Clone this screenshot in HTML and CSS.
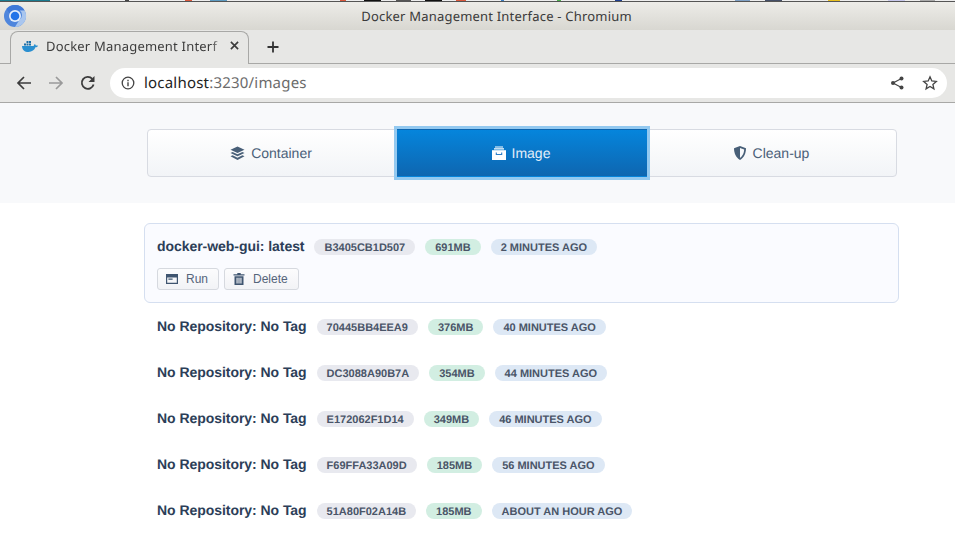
FILE: index.html
```html
<!DOCTYPE html>
<html lang="en">
<head>
    <meta charset="UTF-8">
    <meta name="viewport" content="width=device-width, initial-scale=1.0">
    <title>Docker Management Interface - Chromium</title>
    <link rel="stylesheet" href="styles.css">
</head>
<body>

    <!-- Browser window top -->
    <div class="desk-strip"></div>
    <div class="title-bar">
        <svg class="chromium-logo" width="24" height="24" viewBox="0 0 24 24">
            <circle cx="12" cy="12" r="11" fill="#4f86dc"/>
            <path d="M12 1a11 11 0 0 1 9.600 5.500H12a5.500 5.500 0 0 0-5 3.200L3.400 5A11 11 0 0 1 12 1z" fill="#3f79d8"/>
            <path d="M21.600 6.500A11 11 0 0 1 12 23l4.600-7.500a5.500 5.500 0 0 0 .2-9z" fill="#a9c6ee"/>
            <circle cx="12" cy="12" r="6" fill="#e4eefb"/>
            <circle cx="12" cy="12" r="4.300" fill="#2374e8"/>
        </svg>
        <span>Docker Management Interface - Chromium</span>
    </div>
    <div class="tab-strip">
        <div class="tab">
            <svg class="favicon" width="16" height="12" viewBox="0 0 16 12">
                <path d="M0 6h11.600c.3-1 .9-1.600 1.300-1.900.4.400.8.900.9 1.500.600-.2 1.400-.2 2.200.2-.5 1-1.400 1.500-2.600 1.500C12.500 10 10 12 6.500 12 2.500 12 .3 10 0 6z" fill="#2a8fd0"/>
                <path d="M2 3.500h2v2H2zM4.500 3.500h2v2h-2zM7 3.500h2v2H7zM4.500 1h2v2h-2zM7 1h2v2H7z" fill="#1d6fa8"/>
            </svg>
            <span class="tab-title">Docker Management Interf</span>
            <svg class="tab-close" width="9" height="9" viewBox="0 0 10 10">
                <path d="M1 1l8 8M9 1L1 9" stroke="#3c3c3c" stroke-width="1.800"/>
            </svg>
        </div>
        <svg class="new-tab" width="12" height="12" viewBox="0 0 12 12">
            <path d="M6 .5v11M.5 6h11" stroke="#333" stroke-width="1.800"/>
        </svg>
    </div>
    <div class="toolbar">
        <svg class="nav-icon" width="16" height="16" viewBox="0 0 16 16">
            <path d="M15 8H2M8 2L2 8l6 6" fill="none" stroke="#3c3c3c" stroke-width="1.700"/>
        </svg>
        <svg class="nav-icon" width="16" height="16" viewBox="0 0 16 16">
            <path d="M1 8h13M8 2l6 6-6 6" fill="none" stroke="#9a9a9a" stroke-width="1.700"/>
        </svg>
        <svg class="nav-icon" width="16" height="16" viewBox="0 0 16 16">
            <path d="M13.600 9.500A6 6 0 1 1 12.300 3.800" fill="none" stroke="#3c3c3c" stroke-width="1.800"/>
            <path d="M14.500 1v6h-6z" fill="#3c3c3c"/>
        </svg>
        <div class="omnibox">
            <svg width="14" height="14" viewBox="0 0 14 14">
                <circle cx="7" cy="7" r="5.800" fill="none" stroke="#444" stroke-width="1.300"/>
                <path d="M7 6.200v4M7 3.800v1.400" stroke="#444" stroke-width="1.400"/>
            </svg>
            <span class="url"><span class="url-host">localhost</span>:3230/images</span>
            <svg class="share" width="14" height="14" viewBox="0 0 14 14">
                <path d="M11.500 2.500L3 7l8.500 4.500" fill="none" stroke="#444" stroke-width="1.200"/>
                <circle cx="11.500" cy="2.500" r="2" fill="#444"/>
                <circle cx="3" cy="7" r="2" fill="#444"/>
                <circle cx="11.500" cy="11.500" r="2" fill="#444"/>
            </svg>
            <svg width="16" height="16" viewBox="0 0 16 16">
                <path d="M8 1.800l1.800 4.200 4.500.4-3.400 3 1 4.400L8 11.500l-3.900 2.300 1-4.400-3.400-3 4.500-.4z" fill="none" stroke="#444" stroke-width="1.300"/>
            </svg>
        </div>
    </div>

    <!-- Page hero with tabs -->
    <section class="hero">
        <nav class="page-tabs">
            <a class="page-tab">
                <svg width="15" height="15" viewBox="0 0 15 15">
                    <path d="M7.500 .5l7 3.200-7 3.300-7-3.300z" fill="#485f78"/>
                    <path d="M2.600 6l-2.100 1 7 3.300 7-3.300-2.100-1-4.900 2.300z" fill="#485f78"/>
                    <path d="M2.600 9.300l-2.100 1 7 3.700 7-3.700-2.100-1-4.900 2.400z" fill="#485f78"/>
                </svg>
                Container
            </a>
            <a class="page-tab active">
                <svg width="14" height="14" viewBox="0 0 14 14">
                    <path d="M3 .5h8v1H3zM2 2.300h10v1.100H2z" fill="#fff"/>
                    <path d="M0 4.200h14V14H0z" fill="#fff"/>
                    <path d="M4.300 6.500v2h5.400v-2" fill="none" stroke="#2c7fc9" stroke-width="1.100"/>
                </svg>
                Image
            </a>
            <a class="page-tab">
                <svg width="14" height="14" viewBox="0 0 14 14">
                    <path d="M7 0l6 2.300c0 5-1.800 9.300-6 11.700C2.800 11.600 1 7.300 1 2.300z" fill="#485f78"/>
                    <path d="M7 2l4.200 1.600C11 7 9.800 10 7 11.900z" fill="#f8f9fb"/>
                </svg>
                Clean-up
            </a>
        </nav>
    </section>

    <!-- Image list -->
    <section class="image-list">
        <div class="image-row selected">
            <div class="image-head">
                <h3>docker-web-gui: latest</h3>
                <span class="tag tag-id">B3405CB1D507</span>
                <span class="tag tag-size">691MB</span>
                <span class="tag tag-time">2 MINUTES AGO</span>
            </div>
            <div class="image-actions">
                <button class="action-btn">
                    <svg width="12" height="10" viewBox="0 0 12 10">
                        <path d="M0 0h12v10H0zM1.200 3.400v5.400h9.600V3.400zM2.400 4.500h4.200v1.300H2.400z" fill="#3f5570" fill-rule="evenodd"/>
                    </svg>
                    Run
                </button>
                <button class="action-btn">
                    <svg width="12" height="12" viewBox="0 0 12 12">
                        <path d="M.5 1.300h3.800V0h3.400v1.300h3.800v1.300H.5zM1.500 3.300h9V12h-9zM3.500 4.800v5.700h1.100V4.800zM5.450 4.800v5.700h1.100V4.800zM7.400 4.800v5.700h1.100V4.800z" fill="#3f5570" fill-rule="evenodd"/>
                    </svg>
                    Delete
                </button>
            </div>
        </div>
        <div class="image-row">
            <div class="image-head">
                <h3>No Repository: No Tag</h3>
                <span class="tag tag-id">70445BB4EEA9</span>
                <span class="tag tag-size">376MB</span>
                <span class="tag tag-time">40 MINUTES AGO</span>
            </div>
        </div>
        <div class="image-row">
            <div class="image-head">
                <h3>No Repository: No Tag</h3>
                <span class="tag tag-id">DC3088A90B7A</span>
                <span class="tag tag-size">354MB</span>
                <span class="tag tag-time">44 MINUTES AGO</span>
            </div>
        </div>
        <div class="image-row">
            <div class="image-head">
                <h3>No Repository: No Tag</h3>
                <span class="tag tag-id">E172062F1D14</span>
                <span class="tag tag-size">349MB</span>
                <span class="tag tag-time">46 MINUTES AGO</span>
            </div>
        </div>
        <div class="image-row">
            <div class="image-head">
                <h3>No Repository: No Tag</h3>
                <span class="tag tag-id">F69FFA33A09D</span>
                <span class="tag tag-size">185MB</span>
                <span class="tag tag-time">56 MINUTES AGO</span>
            </div>
        </div>
        <div class="image-row">
            <div class="image-head">
                <h3>No Repository: No Tag</h3>
                <span class="tag tag-id">51A80F02A14B</span>
                <span class="tag tag-size">185MB</span>
                <span class="tag tag-time">ABOUT AN HOUR AGO</span>
            </div>
        </div>
    </section>

</body>
</html>
```

FILE: styles.css
```css
/* General body */
html,
body {
    margin: 0;
    padding: 0;
    height: 549px;
    overflow: hidden;
    background-color: #fff;
    font-family: "Liberation Sans", Arial, sans-serif;
    text-rendering: geometricPrecision;
}

/* Browser window */
.desk-strip {
    height: 1px;
    background-color: #ececec;
    background-image: linear-gradient(to right,
        #1a7a8f 0 50px, #eee 50px 125px, #444 125px 129px, #eee 129px 185px,
        #d9583c 185px 192px, #eee 192px 210px, #5d9ac0 210px 227px, #eee 227px 340px,
        #d9583c 340px 346px, #eee 346px 364px, #111 364px 381px, #eee 381px 396px,
        #555 396px 411px, #eee 411px 425px, #111 425px 442px, #eee 442px 456px,
        #d9583c 456px 466px, #eee 466px 501px, #3d7fc4 501px 504px, #eee 504px 557px,
        #4cae4c 557px 561px, #eee 561px 615px, #1f3f8f 615px 622px, #eee 622px 735px,
        #7fa0c4 735px 750px, #eee 750px 765px, #454f66 765px 782px, #eee 782px 828px,
        #e8c020 828px 840px, #eee 840px 888px, #c8c8ec 888px 905px, #eee 905px 920px,
        #aaa 920px 935px, #eee 935px);
}

.title-bar {
    height: 29px;
    padding-left: 38px;
    display: flex;
    align-items: center;
    justify-content: center;
    position: relative;
    border-top: 1px solid #555;
    box-sizing: border-box;
    background: linear-gradient(#edecE8, #d8d7d1);
    font-family: "Noto Sans", sans-serif;
    font-size: 13px;
    letter-spacing: 0.2px;
    color: #3a3a3a;
}

.chromium-logo {
    position: absolute;
    left: 3px;
    top: 2px;
}

.tab-strip {
    height: 33px;
    display: flex;
    align-items: flex-end;
    background-color: #e7e7e5;
    border-bottom: 1px solid #a8a8a6;
}

.tab {
    width: 239px;
    height: 33px;
    margin-left: 10px;
    margin-bottom: -1px;
    padding: 0 9px 5px 11px;
    box-sizing: border-box;
    display: flex;
    align-items: center;
    background-color: #e7e7e5;
    border: 1px solid #a8a8a6;
    border-bottom: none;
    border-radius: 8px 8px 0 0;
    font-family: "Noto Sans", sans-serif;
    font-size: 13px;
    letter-spacing: 0.2px;
    color: #3c3c3c;
}

.favicon {
    flex-shrink: 0;
    margin-right: 8px;
}

.tab-title {
    flex: 1;
    overflow: hidden;
    white-space: nowrap;
    -webkit-mask-image: linear-gradient(to left, transparent, #000 10px);
    mask-image: linear-gradient(to left, transparent, #000 10px);
}

.tab-close {
    flex-shrink: 0;
    margin-left: 8px;
}

.new-tab {
    align-self: center;
    margin-left: 18px;
}

.toolbar {
    height: 39px;
    display: flex;
    align-items: center;
    padding-left: 16px;
    box-sizing: border-box;
    background-color: #e7e7e5;
    border-bottom: 1px solid #a8a8a6;
}

.nav-icon {
    margin-right: 16px;
}

.omnibox {
    width: 837px;
    height: 30px;
    margin-left: -2px;
    padding: 0 9px 0 11px;
    box-sizing: border-box;
    display: flex;
    align-items: center;
    gap: 9px;
    background-color: #fff;
    border-radius: 15px;
}

.url {
    flex: 1;
    font-family: "Noto Sans", sans-serif;
    font-size: 15px;
    letter-spacing: 0.2px;
    color: #6b6b6b;
}

.url-host {
    color: #222;
}

.share {
    margin-right: 9px;
}

/* Hero with page tabs */
.hero {
    height: 100px;
    padding: 26px 58px 0 147px;
    box-sizing: border-box;
    background-color: #f8f9fb;
}

.page-tabs {
    display: flex;
    height: 48px;
}

.page-tab {
    flex: 1;
    padding-right: 2px;
    display: flex;
    align-items: center;
    justify-content: center;
    gap: 6px;
    font-size: 14px;
    color: #4a6078;
    background: linear-gradient(#fff, #f2f4f7);
    border: 1px solid #d8dbe2;
}

.page-tab:first-child {
    border-radius: 4px 0 0 4px;
}

.page-tab:last-child {
    border-radius: 0 4px 4px 0;
}

.page-tab.active {
    color: #e3eef9;
    background: linear-gradient(#0585dc, #0e66b0);
    border-color: transparent;
    outline: 3px solid #93c9f0;
    position: relative;
}

/* Image list */
.image-list {
    padding: 20px 56px 0 144px;
}

.image-row {
    padding: 14px 12px 0 12px;
    height: 46px;
    box-sizing: border-box;
    border: 1px solid transparent;
}

.image-row.selected {
    height: 80px;
    background-color: #fafbff;
    border-color: #d5dff0;
    border-radius: 6px;
}

.image-head {
    display: flex;
    align-items: center;
    height: 18px;
}

.image-head h3 {
    margin: -2px 10px 0 0;
    font-size: 14px;
    font-weight: bold;
    letter-spacing: -0.05px;
    color: #2c3e58;
}

.tag {
    height: 16px;
    line-height: 18px;
    padding: 0 10px;
    margin-right: 10px;
    border-radius: 8px;
    font-size: 11px;
    font-weight: bold;
    color: #4a5568;
}

.tag-id {
    background-color: #e8e9ef;
}

.tag-size {
    background-color: #d2eee2;
}

.tag-time {
    background-color: #dde8f5;
}

.image-actions {
    display: flex;
    gap: 5px;
    margin-top: 12px;
}

/* Action buttons */
.action-btn {
    height: 22px;
    padding: 0 10px 0 8px;
    display: flex;
    align-items: center;
    gap: 8px;
    font-family: "Liberation Sans", Arial, sans-serif;
    font-size: 12px;
    color: #55657a;
    background: linear-gradient(#fcfcfd, #f2f3f6);
    border: 1px solid #d6d9df;
    border-radius: 3px;
}
```
